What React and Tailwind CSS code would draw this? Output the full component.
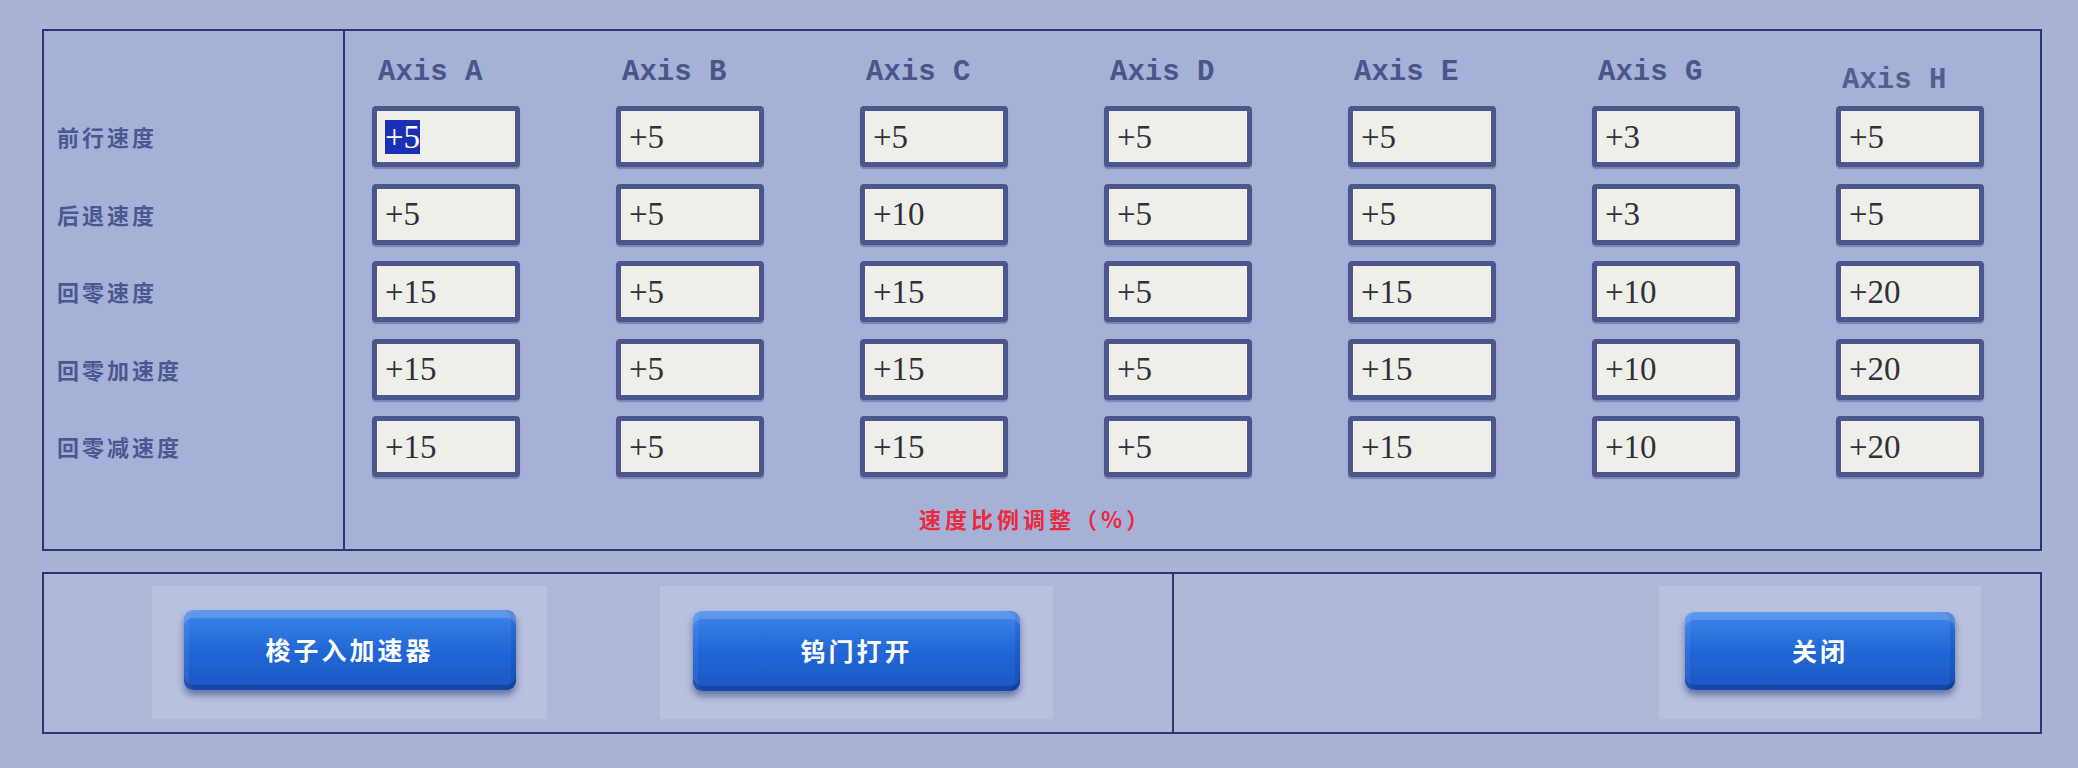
import React from 'react';

const axes = [
  { name: 'Axis A', values: ['+5', '+5', '+15', '+15', '+15'], head: '' },
  { name: 'Axis B', values: ['+5', '+5', '+5', '+5', '+5'], head: '' },
  { name: 'Axis C', values: ['+5', '+10', '+15', '+15', '+15'], head: '' },
  { name: 'Axis D', values: ['+5', '+5', '+5', '+5', '+5'], head: '' },
  { name: 'Axis E', values: ['+5', '+5', '+15', '+15', '+15'], head: '' },
  { name: 'Axis G', values: ['+3', '+3', '+10', '+10', '+10'], head: '' },
  { name: 'Axis H', values: ['+5', '+5', '+20', '+20', '+20'], head: 'translate-y-[8px] opacity-90' },
];

const labels = ['前行速度', '后退速度', '回零速度', '回零加速度', '回零减速度'];

const cjk = { fontFamily: '"Noto Sans CJK SC", "Noto Sans", sans-serif' };

const ValueBox = ({ value, selected }) => (
  <div className="h-[61px] w-[148px] rounded-[4px] border-[5px] border-[#4b568c] bg-[#efefea] pl-[8px] flex items-center shadow-[0_2px_1px_rgba(40,50,100,0.35)]">
    <span
      className={`text-[33px] leading-[34px] ${selected ? 'bg-[#1b2fb4] text-white' : 'text-[#30303a]'}`}
      style={{ fontFamily: '"Liberation Serif", serif' }}
    >
      {value}
    </span>
  </div>
);

const BlueButton = ({ label, halo, button }) => (
  <div className={`${halo} flex items-center justify-center bg-[#bac1de]`}>
    <button
      className={`${button} relative rounded-[9px] bg-linear-to-b from-[#3f86ea] via-[#2167d6] to-[#1a57c4] shadow-[0_5px_7px_rgba(20,40,110,0.5),inset_0_8px_0_rgba(255,255,255,0.16),inset_5px_0_0_rgba(255,255,255,0.06),inset_-5px_0_0_rgba(0,20,80,0.12),inset_0_-5px_0_rgba(0,20,80,0.25)] text-white font-bold text-[25px] tracking-[3px]`}
      style={cjk}
    >
      {label}
    </button>
  </div>
);

export default function App() {
  return (
    <div className="w-[2078px] h-[768px] bg-[#aab3d3] pt-[29px] pl-[42px] overflow-hidden">
      {/* Speed ratio panel */}
      <div className="w-[2000px] h-[522px] border-2 border-[#2d3672] bg-[#a6b1d8] flex">
        <div className="w-[301px] border-r-2 border-[#2d3672] pt-[75px] pl-[13px] flex flex-col gap-[16.5px]">
          {labels.map((l) => (
            <div
              key={l}
              className="h-[61px] flex items-center text-[22px] font-bold tracking-[3px] text-[#4b5890]"
              style={cjk}
            >
              {l}
            </div>
          ))}
        </div>

        <div className="flex-1 pl-[27px] flex flex-col">
          <div className="flex gap-[96px]">
            {axes.map((a, ci) => (
              <div key={a.name} className="w-[148px] flex flex-col">
                <div className="h-[75px] flex items-end pb-[16px]">
                  <span
                    className={`pl-[6px] text-[29px] leading-[34px] font-bold text-[#4a5688] ${a.head}`}
                    style={{ fontFamily: '"Liberation Mono", monospace' }}
                  >
                    {a.name}
                  </span>
                </div>
                <div className="flex flex-col gap-[16.5px]">
                  {a.values.map((v, ri) => (
                    <ValueBox key={ri} value={v} selected={ci === 0 && ri === 0} />
                  ))}
                </div>
              </div>
            ))}
          </div>
          <div
            className="mt-[26px] ml-[547px] h-[30px] leading-[30px] text-[22px] font-bold tracking-[4px] text-[#ea2a3c]"
            style={cjk}
          >
            速度比例调整（%）
          </div>
        </div>
      </div>

      {/* Action panel */}
      <div className="mt-[21px] w-[2000px] h-[162px] border-2 border-[#2d3672] bg-[#b0b8d7] flex">
        <div className="w-[1130px] border-r-2 border-[#2d3672] pl-[108px] pt-[12px] flex gap-[113px]">
          <BlueButton label="梭子入加速器" halo="w-[395px] h-[133px]" button="w-[332px] h-[80px] mt-[-6px]" />
          <BlueButton label="钨门打开" halo="w-[393px] h-[133px]" button="w-[327px] h-[80px] mt-[-4px]" />
        </div>
        <div className="flex-1 flex justify-end pr-[59px] pt-[12px]">
          <BlueButton label="关闭" halo="w-[322px] h-[133px]" button="w-[270px] h-[78px] mt-[-4px]" />
        </div>
      </div>
    </div>
  );
}
